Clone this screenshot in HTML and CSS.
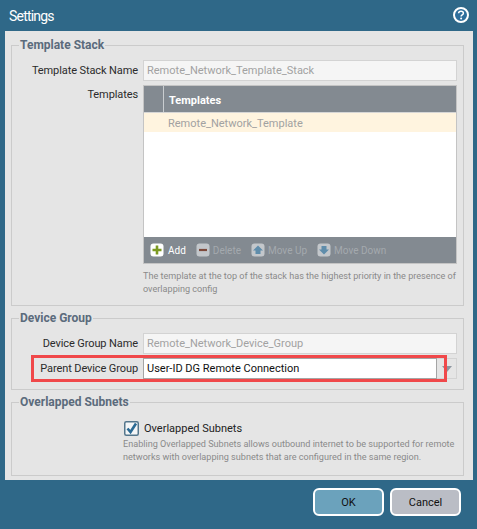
FILE: index.html
```html
<!DOCTYPE html>
<html lang="en">
<head>
    <meta charset="UTF-8">
    <title>Settings</title>
    <link rel="stylesheet" href="styles.css">
</head>
<body>
    <div class="dialog">
        <div class="title-bar">
            <span class="title">Settings</span>
            <svg class="help-icon" width="16" height="16" viewBox="0 0 16 16">
                <circle cx="8" cy="8" r="7" fill="#2f6f9c" stroke="#fff" stroke-width="2"/>
                <path d="M5.6 6.3C5.7 4.9 6.7 4.2 8 4.2c1.400 0 2.400.8 2.400 2 0 1.800-2.300 1.700-2.300 3.300" fill="none" stroke="#fff" stroke-width="1.500"/>
                <circle cx="8.100" cy="11.500" r="1" fill="#fff"/>
            </svg>
        </div>
        <div class="panel">
            <fieldset class="group stack-group">
                <legend>Template Stack</legend>
                <div class="row">
                    <label class="field-label">Template Stack Name</label>
                    <div class="input disabled">Remote_Network_Template_Stack</div>
                </div>
                <div class="row templates-row">
                    <label class="field-label">Templates</label>
                    <div class="field-body">
                        <div class="grid">
                            <div class="grid-head">
                                <div class="grid-check"></div>
                                <div class="grid-title">Templates</div>
                            </div>
                            <div class="grid-row">Remote_Network_Template</div>
                            <div class="grid-empty"></div>
                            <div class="grid-bar">
                                <span class="tool active">
                                    <svg width="14" height="14" viewBox="0 0 14 14"><rect x="0.500" y="0.500" width="13" height="13" rx="3" fill="#fff"/><path d="M7 2.500v9M2.500 7h9" stroke="#7c9a22" stroke-width="2.600"/></svg>
                                    Add
                                </span>
                                <span class="tool">
                                    <svg width="14" height="14" viewBox="0 0 14 14"><rect x="0.500" y="0.500" width="13" height="13" rx="3" fill="#c3c7cb"/><path d="M3 7h8" stroke="#7d4a3c" stroke-width="2.200"/></svg>
                                    Delete
                                </span>
                                <span class="tool">
                                    <svg width="14" height="14" viewBox="0 0 14 14"><rect x="0.500" y="0.500" width="13" height="13" rx="3" fill="#c3c7cb"/><path d="M7 2.500L12 7.500H9.500V11h-5V7.500H2z" fill="#5f8dab"/></svg>
                                    Move Up
                                </span>
                                <span class="tool">
                                    <svg width="14" height="14" viewBox="0 0 14 14"><rect x="0.500" y="0.500" width="13" height="13" rx="3" fill="#c3c7cb"/><path d="M7 11.500L12 6.500H9.500V3h-5v3.500H2z" fill="#5f8dab"/></svg>
                                    Move Down
                                </span>
                            </div>
                        </div>
                        <p class="hint">The template at the top of the stack has the highest priority in the presence of overlapping config</p>
                    </div>
                </div>
            </fieldset>

            <fieldset class="group device-group">
                <legend>Device Group</legend>
                <div class="row">
                    <label class="field-label">Device Group Name</label>
                    <div class="input disabled">Remote_Network_Device_Group</div>
                </div>
                <div class="row parent-row">
                    <label class="field-label">Parent Device Group</label>
                    <div class="combo">
                        <div class="combo-value">User-ID DG Remote Connection</div>
                        <div class="combo-arrow"><span class="arrow"></span></div>
                    </div>
                    <div class="highlight"></div>
                </div>
            </fieldset>

            <fieldset class="group subnet-group">
                <legend>Overlapped Subnets</legend>
                <div class="check-row">
                    <svg class="check-box" width="15" height="15" viewBox="0 0 15 15">
                        <rect x="0.750" y="0.750" width="13.500" height="13.500" rx="1.500" fill="#f4f6f7" stroke="#54768c" stroke-width="1.500"/>
                        <path d="M3.500 7.500L6.500 11L12 2.500" fill="none" stroke="#2b6a94" stroke-width="2.600"/>
                    </svg>
                    <span class="check-label">Overlapped Subnets</span>
                </div>
                <p class="hint check-hint">Enabling Overlapped Subnets allows outbound internet to be supported for remote networks with overlapping subnets that are configured in the same region.</p>
            </fieldset>
        </div>
        <div class="footer">
            <button class="btn btn-ok">OK</button>
            <button class="btn btn-cancel">Cancel</button>
        </div>
    </div>
</body>
</html>
```

FILE: styles.css
```css
html, body {
    margin: 0;
    height: 100%;
}
body {
    background-color: #2f6888;
    font-family: Roboto, "Noto Sans", sans-serif;
    font-size: 11px;
    color: #222;
    overflow: hidden;
}
.title-bar {
    height: 31px;
    display: flex;
    align-items: center;
    justify-content: space-between;
    padding: 0 8px 0 9px;
}
.title {
    color: #fff;
    font-size: 14px;
    letter-spacing: -0.8px;
}
.help-icon {
    display: block;
    margin-bottom: 2px;
}
.panel {
    background-color: #e5e5e5;
    margin: 0 4px 0 5px;
    height: 449px;
    padding: 7px 9px 0 6px;
    box-sizing: border-box;
}
.group {
    margin: 0 0 5px 0;
    padding: 0 6px 0 0;
    border: 1px solid #cbcbcb;
    min-width: 0;
    box-sizing: border-box;
}
.group legend {
    margin-left: 7px;
    padding: 0 1px;
    color: #5b6b7c;
    font-size: 12px;
    font-weight: bold;
    line-height: 14px;
}
.stack-group {
    height: 268px;
}
.device-group {
    height: 79px;
}
.subnet-group {
    height: 81px;
    margin-bottom: 0;
}
.row {
    display: flex;
    align-items: center;
    margin-top: 8px;
}
.field-label {
    width: 131px;
    flex: none;
    text-align: right;
    padding-right: 5px;
    box-sizing: border-box;
    color: #2b2b2b;
    letter-spacing: -0.1px;
}
.input {
    flex: 1;
    height: 21px;
    line-height: 20px;
    padding: 0 3px;
    box-sizing: border-box;
    border: 1px solid #d3d3d3;
}
.input.disabled {
    background-color: #f5f5f5;
    color: #a2a2a2;
}
.templates-row {
    align-items: flex-start;
    margin-top: 4px;
}
.templates-row .field-label {
    padding-top: 3px;
}
.field-body {
    flex: 1;
    min-width: 0;
}
.grid {
    border: 1px solid #c4c4c4;
    height: 179px;
    box-sizing: border-box;
    display: flex;
    flex-direction: column;
    background-color: #fff;
}
.grid-head {
    background-color: #838a91;
    height: 27px;
    display: flex;
    flex: none;
    border-bottom: 1px solid #d6d6d6;
    box-sizing: border-box;
}
.grid-check {
    width: 19px;
    border-right: 1px solid #c9cdd0;
}
.grid-title {
    color: #fff;
    font-weight: bold;
    line-height: 29px;
    padding-left: 5px;
}
.grid-row {
    background-color: #fff4df;
    color: #a2a2a2;
    height: 19px;
    flex: none;
    line-height: 21px;
    padding-left: 24px;
}
.grid-empty {
    flex: 1;
}
.grid-bar {
    background-color: #838a91;
    height: 26px;
    flex: none;
    display: flex;
    align-items: center;
    padding-left: 6px;
    gap: 10px;
    color: #a3a9ae;
    font-size: 10px;
}
.tool {
    display: flex;
    align-items: center;
    gap: 3px;
}
.tool.active {
    color: #fff;
    gap: 4px;
}
.hint {
    margin: 6px 0 0;
    color: #8a8a8a;
    font-size: 9.1px;
    line-height: 13px;
}
.parent-row {
    position: relative;
    margin-top: 4px;
}
.combo {
    flex: 1;
    display: flex;
    height: 21px;
}
.combo-value {
    flex: 1;
    background-color: #fff;
    color: #111;
    border: 1px solid #a5a5a5;
    line-height: 20px;
    padding-left: 3px;
    box-sizing: border-box;
}
.combo-arrow {
    width: 20px;
    border: 1px solid #d3d3d3;
    border-left: none;
    box-sizing: border-box;
    display: flex;
    align-items: center;
    justify-content: center;
}
.arrow {
    border-left: 5px solid transparent;
    border-right: 5px solid transparent;
    border-top: 6px solid #8d96a0;
}
.highlight {
    position: absolute;
    left: 19px;
    top: -3px;
    width: 416px;
    height: 27px;
    box-sizing: border-box;
    border: 3px solid #f0484a;
}
.check-row {
    display: flex;
    align-items: center;
    margin: 12px 0 0 112px;
    gap: 5px;
}
.check-box {
    display: block;
}
.check-label {
    color: #222;
}
.check-hint {
    margin: 2px 0 0 111px;
}
.footer {
    display: flex;
    justify-content: flex-end;
    gap: 6px;
    padding: 8px 16px 0 0;
}
.btn {
    width: 71px;
    height: 28px;
    border: 2px solid #fff;
    border-radius: 6px;
    font-family: Roboto, sans-serif;
    font-size: 11px;
    color: #111;
    padding: 0;
}
.btn-ok {
    background-color: #6ba2bc;
}
.btn-cancel {
    background-color: #babdc5;
}
```
